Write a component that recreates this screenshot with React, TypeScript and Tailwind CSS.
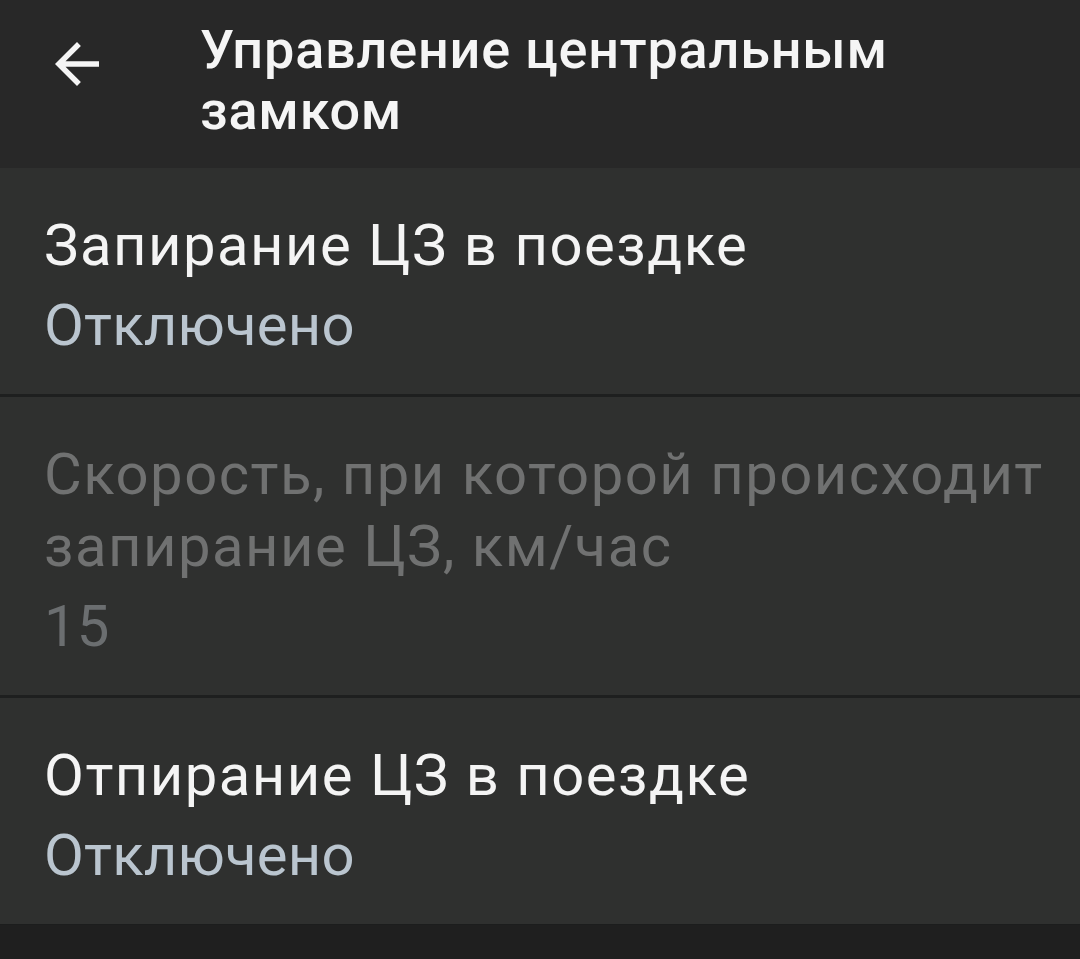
import React from 'react';

interface PrefItemProps {
  title: string;
  summary: string;
  disabled?: boolean;
}

const PrefItem: React.FC<PrefItemProps> = ({ title, summary, disabled }) => (
  <div className="bg-[#2f302f] pl-[44px] pr-[20px] pt-[41px] pb-[33px]">
    <div className={`text-[58px] leading-[72px] tracking-[1.5px] ${disabled ? 'text-[#707171]' : 'text-[#f4f4f4]'}`}>{title}</div>
    <div className={`mt-[8px] text-[58px] leading-[72px] tracking-[0.2px] ${disabled ? 'text-[#6b6e70]' : 'text-[#bac5cf]'}`}>{summary}</div>
  </div>
);

const App: React.FC = () => {
  return (
    <div className="min-h-screen bg-[#1f1f1f] font-['Roboto',sans-serif]">
      <div className="flex bg-[#282828] h-[168px]">
        <div className="pl-[44px] pt-[31px] w-[200px] shrink-0">
          <svg viewBox="0 0 24 24" className="w-[66px] h-[66px]" fill="#f5f5f5">
            <path d="M20 11H7.83l5.59-5.59L12 4l-8 8 8 8 1.41-1.41L7.83 13H20v-2z" />
          </svg>
        </div>
        <h1 className="pt-[19px] text-[54px] leading-[61px] tracking-[0.8px] font-medium text-[#f5f5f5]">
          Управление центральным
          <br />
          замком
        </h1>
      </div>
      <PrefItem title="Запирание ЦЗ в поездке" summary="Отключено" />
      <div className="h-[3px] bg-[#1e1f1f]" />
      <PrefItem title="Скорость, при которой происходит запирание ЦЗ, км/час" summary="15" disabled />
      <div className="h-[3px] bg-[#1e1f1f]" />
      <PrefItem title="Отпирание ЦЗ в поездке" summary="Отключено" />
      <div className="h-[1px] bg-[#1c1d1d]" />
    </div>
  );
};

export default App;
